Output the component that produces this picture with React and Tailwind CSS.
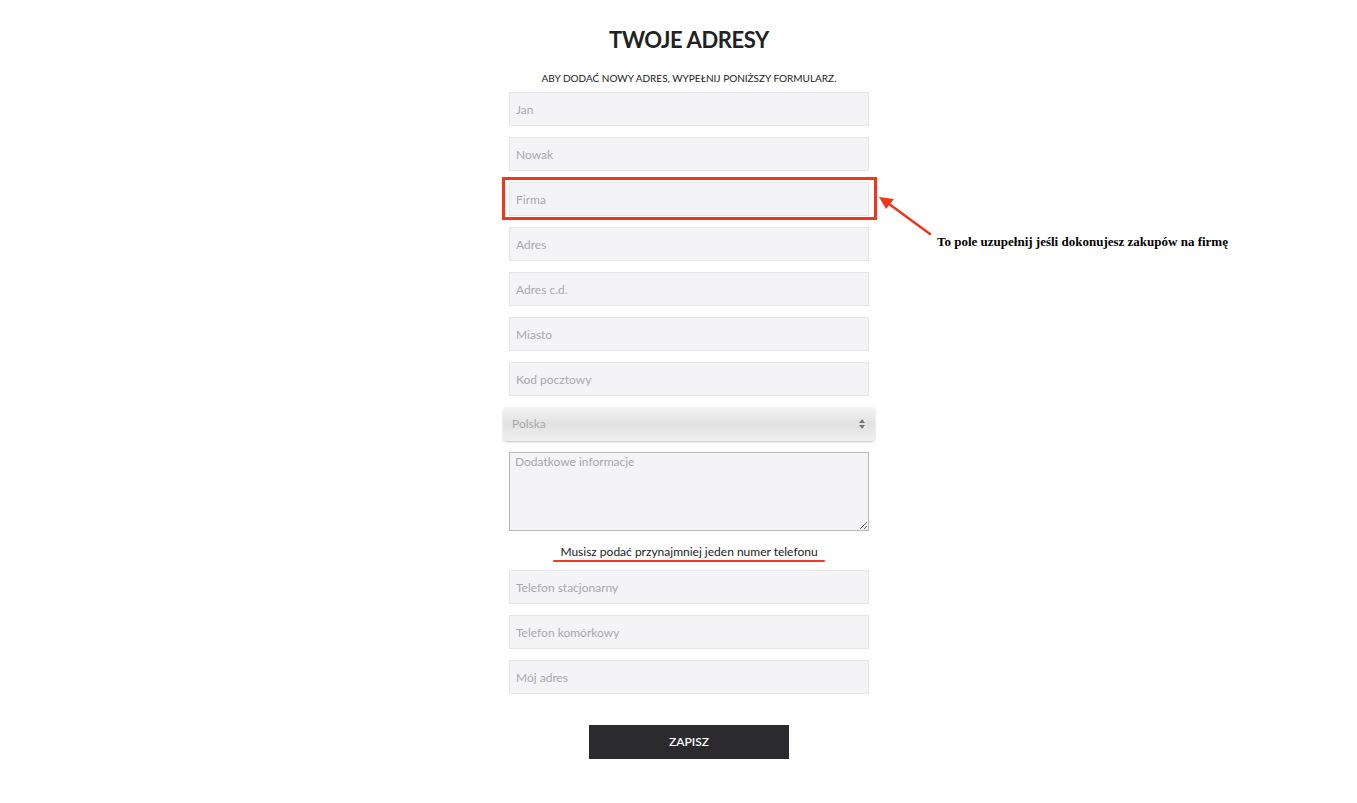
import React from 'react';

const fields = ['Jan', 'Nowak', 'Firma', 'Adres', 'Adres c.d.', 'Miasto', 'Kod pocztowy'];
const phones = ['Telefon stacjonarny', 'Telefon komórkowy', 'Mój adres'];

const Field = ({ placeholder }) => (
  <input
    type="text"
    placeholder={placeholder}
    className="block w-[360px] h-[34px] px-[6px] bg-[#f4f4f6] border border-[#e6e6e8] text-[12px] text-[#333] placeholder:text-[#a9a9ab] outline-none"
  />
);

const App = () => {
  return (
    <div className="relative min-h-[803px] bg-white font-['Lato',_'Open_Sans',_sans-serif] text-[#222]">
      <div className="flex justify-center pl-[21px]">
        <div className="flex flex-col items-center w-[360px] pt-[26px]">
          <h1 className="text-[22px] leading-[28px] font-bold tracking-[-0.4px] text-[#222] whitespace-nowrap">TWOJE ADRESY</h1>
          <p className="mt-[17px] text-[10px] leading-[14px] whitespace-nowrap text-[#222]">
            ABY DODAĆ NOWY ADRES, WYPEŁNIJ PONIŻSZY FORMULARZ.
          </p>

          <div className="mt-[7px] flex flex-col gap-[11px]">
            {fields.map((f) => (
              <Field key={f} placeholder={f} />
            ))}
            <div className="-mx-[6px] w-[372px] h-[34px] rounded-[4px] bg-gradient-to-b from-[#f4f4f4] via-[#e2e2e2] to-[#f0f0f0] shadow-[0_1px_2px_rgba(0,0,0,0.25)] flex items-center justify-between px-[9px]">
              <span className="text-[12px] text-[#a9a9ab]">Polska</span>
              <svg width="8" height="12" viewBox="0 0 8 12">
                <path d="M4 1 L7 5 H1 Z" fill="#777" />
                <path d="M4 11 L7 7 H1 Z" fill="#777" />
              </svg>
            </div>
            <textarea
              placeholder="Dodatkowe informacje"
              className="block w-[360px] h-[79px] px-[5px] py-0 bg-[#f4f4f6] border border-[#b9b9bb] text-[12px] placeholder:text-[#a9a9ab] outline-none resize-y"
            />
          </div>

          <div className="relative mt-[14px] mb-[11px]">
            <p className="text-[12px] leading-[14px] text-[#222] whitespace-nowrap">
              Musisz podać przynajmniej jeden numer telefonu
            </p>
            <div className="absolute left-[-7px] right-[-7px] top-[15px] h-[2px] bg-[#f03a23] rounded-full" />
          </div>

          <div className="flex flex-col gap-[11px]">
            {phones.map((f) => (
              <Field key={f} placeholder={f} />
            ))}
          </div>

          <button className="mt-[31px] w-[200px] h-[34px] bg-[#2b2a2f] text-white text-[12px] font-semibold">
            ZAPISZ
          </button>
        </div>
      </div>

      {/* annotations */}
      <div className="absolute left-[502px] top-[177px] w-[375px] h-[43px] border-[3px] border-[#f0361c]" />
      <svg className="absolute left-[875px] top-[190px]" width="60" height="50" viewBox="0 0 60 50">
        <line x1="55" y1="44" x2="10" y2="11" stroke="#f0361c" strokeWidth="2.5" strokeLinecap="round" />
        <path d="M4 7 L19 9 L11 19 Z" fill="#f0361c" />
      </svg>
      <p className="absolute left-[937px] top-[234px] font-['Liberation_Serif',_serif] font-bold text-[13px] leading-[16px] text-black whitespace-nowrap">
        To pole uzupełnij jeśli dokonujesz zakupów na firmę
      </p>
    </div>
  );
};

export default App;
